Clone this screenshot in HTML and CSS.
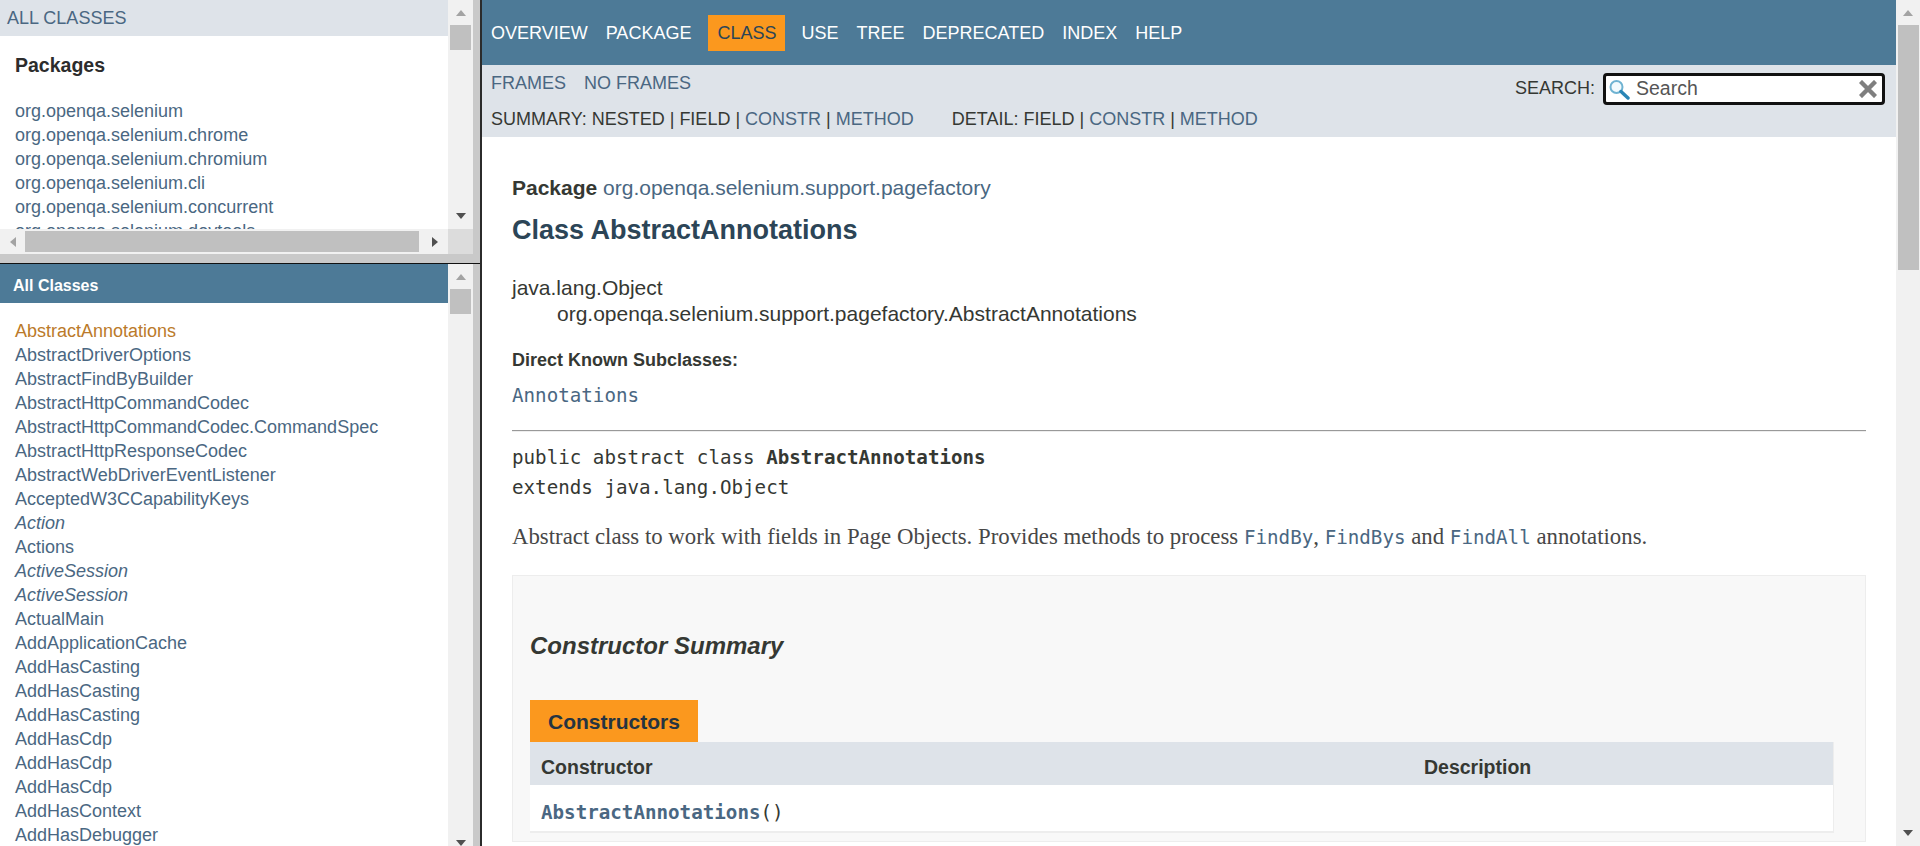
FILE: index.html
```html
<!doctype HTML>
<html>

<head>
  <title>AbstractAnnotations</title>
  <link rel="stylesheet" href="styles.css">
</head>

<body>
  <div class="frames">
    <div class="side">
      <div class="packages-frame">
        <div class="packages-view">
          <div class="packages-scroll">
            <div class="all-link"><a href="#">ALL CLASSES</a></div>
            <h2 class="packages-title">Packages</h2>
            <ul class="side-list packages-list">
              <li><a href="#">org.openqa.selenium</a></li>
              <li><a href="#">org.openqa.selenium.chrome</a></li>
              <li><a href="#">org.openqa.selenium.chromium</a></li>
              <li><a href="#">org.openqa.selenium.cli</a></li>
              <li><a href="#">org.openqa.selenium.concurrent</a></li>
              <li><a href="#">org.openqa.selenium.devtools</a></li>
            </ul>
          </div>
          <div class="vbar vbar-top">
            <span class="arrow up faint"></span>
            <span class="thumb"></span>
            <span class="arrow down"></span>
          </div>
        </div>
        <div class="hbar">
          <div class="hbar-track">
            <span class="arrow left faint"></span>
            <span class="hthumb"></span>
            <span class="arrow right"></span>
          </div>
          <div class="hbar-corner"></div>
        </div>
      </div>
      <div class="classes-frame">
        <div class="classes-scroll">
          <h1 class="classes-title">All Classes</h1>
          <ul class="side-list classes-list">
            <li><a href="#" class="visited">AbstractAnnotations</a></li>
            <li><a href="#">AbstractDriverOptions</a></li>
            <li><a href="#">AbstractFindByBuilder</a></li>
            <li><a href="#">AbstractHttpCommandCodec</a></li>
            <li><a href="#">AbstractHttpCommandCodec.CommandSpec</a></li>
            <li><a href="#">AbstractHttpResponseCodec</a></li>
            <li><a href="#">AbstractWebDriverEventListener</a></li>
            <li><a href="#">AcceptedW3CCapabilityKeys</a></li>
            <li><a href="#"><i>Action</i></a></li>
            <li><a href="#">Actions</a></li>
            <li><a href="#"><i>ActiveSession</i></a></li>
            <li><a href="#"><i>ActiveSession</i></a></li>
            <li><a href="#">ActualMain</a></li>
            <li><a href="#">AddApplicationCache</a></li>
            <li><a href="#">AddHasCasting</a></li>
            <li><a href="#">AddHasCasting</a></li>
            <li><a href="#">AddHasCasting</a></li>
            <li><a href="#">AddHasCdp</a></li>
            <li><a href="#">AddHasCdp</a></li>
            <li><a href="#">AddHasCdp</a></li>
            <li><a href="#">AddHasContext</a></li>
            <li><a href="#">AddHasDebugger</a></li>
          </ul>
        </div>
        <div class="vbar vbar-classes">
          <span class="arrow up faint"></span>
          <span class="thumb"></span>
          <span class="arrow down"></span>
        </div>
      </div>
    </div>

    <main class="content-frame">
      <div class="content-scroll">
        <nav class="topnav">
          <a href="#">OVERVIEW</a>
          <a href="#">PACKAGE</a>
          <a href="#" class="current">CLASS</a>
          <a href="#">USE</a>
          <a href="#">TREE</a>
          <a href="#">DEPRECATED</a>
          <a href="#">INDEX</a>
          <a href="#">HELP</a>
        </nav>
        <div class="subnav">
          <div class="subnav-links">
            <div class="frames-links"><a href="#">FRAMES</a><a href="#">NO FRAMES</a></div>
            <div class="summary-links">
              <span>SUMMARY: NESTED | FIELD | <a href="#">CONSTR</a> | <a href="#">METHOD</a></span>
              <span>DETAIL: FIELD | <a href="#">CONSTR</a> | <a href="#">METHOD</a></span>
            </div>
          </div>
          <div class="search">
            <label for="search">SEARCH:</label>
            <div class="search-box">
              <svg class="search-icon" width="23" height="21" viewBox="0 0 23 21">
                <circle cx="8.5" cy="8" r="6" fill="#f2fafd" stroke="#6fb3d2" stroke-width="2"/>
                <path d="M13 12.5l7 6.5" stroke="#2a85b5" stroke-width="3.4" stroke-linecap="round"/>
              </svg>
              <input id="search" type="text" placeholder="Search">
              <svg class="search-clear" width="18" height="18" viewBox="0 0 18 18">
                <path d="M3 3l12 12M15 3L3 15" stroke="#7f7f7f" stroke-width="4.4" stroke-linecap="square"/>
              </svg>
            </div>
          </div>
        </div>

        <div class="page">
          <div class="package-line"><b>Package</b> <a href="#">org.openqa.selenium.support.pagefactory</a></div>
          <h2 class="class-title">Class AbstractAnnotations</h2>
          <div class="inherit">
            <div>java.lang.Object</div>
            <div class="inherit-child">org.openqa.selenium.support.pagefactory.AbstractAnnotations</div>
          </div>
          <div class="subclass-label">Direct Known Subclasses:</div>
          <div class="subclass-link"><a href="#" class="mono">Annotations</a></div>
          <hr class="rule">
          <pre class="signature">public abstract class <b>AbstractAnnotations</b>
extends java.lang.Object</pre>
          <div class="description">Abstract class to work with fields in Page Objects. Provides methods to process <a href="#" class="mono">FindBy</a>, <a href="#" class="mono">FindBys</a> and <a href="#" class="mono">FindAll</a> annotations.</div>

          <section class="summary-box">
            <h3 class="summary-title">Constructor Summary</h3>
            <div class="tab"><span>Constructors</span></div>
            <div class="table">
              <div class="table-head"><span class="col-first">Constructor</span><span>Description</span></div>
              <div class="table-row"><span class="mono"><a href="#">AbstractAnnotations</a>()</span></div>
            </div>
          </section>
        </div>
      </div>
      <div class="vbar vbar-main">
        <span class="arrow up faint"></span>
        <span class="thumb"></span>
        <span class="arrow down"></span>
      </div>
    </main>
  </div>
</body>

</html>
```

FILE: styles.css
```css
*,
*::before,
*::after {
  box-sizing: border-box;
}

html,
body {
  margin: 0;
  height: 100%;
  overflow: hidden;
}

body {
  font-family: "Liberation Sans", Arial, sans-serif;
  font-size: 18px;
  color: #353833;
  background: #fff;
}

a {
  color: #4a6782;
  text-decoration: none;
}

h1,
h2,
h3,
ul,
pre {
  margin: 0;
  padding: 0;
}

ul {
  list-style: none;
}

.frames {
  display: flex;
  height: 846px;
}

.side {
  width: 480px;
  flex: none;
  display: flex;
  flex-direction: column;
}

.content-frame {
  flex: 1;
  display: flex;
  min-width: 0;
  border-left: 2px solid #2b2b2b;
}

/* left frames */
.packages-frame {
  height: 263px;
  flex: none;
  display: flex;
  flex-direction: column;
  background: #c9c9c9;
  padding-right: 7px;
  padding-bottom: 9px;
}

.packages-view {
  height: 229px;
  display: flex;
}

.packages-scroll,
.classes-scroll {
  width: 448px;
  overflow: hidden;
  background: #fff;
}

.all-link {
  height: 36px;
  background: #dee3e9;
  padding-left: 7px;
  line-height: 36px;
}

.packages-title {
  font-size: 19.5px;
  line-height: 24px;
  padding: 17px 0 0 15px;
  color: #2c2c2c;
}

.side-list {
  padding-left: 15px;
  line-height: 24px;
  white-space: nowrap;
}

.packages-list {
  padding-top: 22px;
}

.classes-frame {
  flex: 1;
  min-height: 0;
  display: flex;
  border-top: 1px solid #111;
  background: #c9c9c9;
  padding-right: 7px;
}

.classes-title {
  height: 39px;
  line-height: 43px;
  padding-left: 13px;
  font-size: 16px;
  color: #fff;
  background: #4d7a97;
}

.classes-list {
  padding-top: 16px;
}

.visited {
  color: #bb7a2a;
}

/* scrollbars */
.vbar {
  width: 25px;
  flex: none;
  display: flex;
  flex-direction: column;
  align-items: center;
  background: #f1f1f1;
  padding: 10px 0;
}

.vbar-classes {
  padding-bottom: 0;
}

.thumb {
  width: 21px;
  height: 25px;
  margin-top: 9px;
  background: #c0c0c0;
}

.vbar .arrow.down {
  margin-top: auto;
}

.vbar-main {
  width: 24px;
}

.vbar-main .thumb {
  height: 245px;
}

.hbar {
  height: 25px;
  flex: none;
  display: flex;
}

.hbar-track {
  width: 448px;
  display: flex;
  align-items: center;
  background: #f1f1f1;
  padding: 0 10px;
}

.hthumb {
  width: 394px;
  height: 21px;
  margin-left: 9px;
  background: #c0c0c0;
}

.hbar .arrow.right {
  margin-left: auto;
}

.hbar-corner {
  width: 25px;
  background: #dcdcdc;
}

.arrow {
  width: 0;
  height: 0;
  flex: none;
  border: 5.5px solid transparent;
}

.arrow.up {
  border-top-width: 0;
  border-bottom: 6px solid #505050;
}

.arrow.down {
  border-bottom-width: 0;
  border-top: 6px solid #505050;
}

.arrow.left {
  border-left-width: 0;
  border-right: 6px solid #505050;
}

.arrow.right {
  border-right-width: 0;
  border-left: 6px solid #505050;
}

.arrow.up.faint {
  border-bottom-color: #a3a3a3;
}

.arrow.left.faint {
  border-right-color: #a3a3a3;
}

/* content frame */
.content-scroll {
  flex: 1;
  min-width: 0;
  overflow: hidden;
}

.topnav {
  height: 65px;
  display: flex;
  align-items: flex-start;
  gap: 18px;
  padding: 15px 0 0 9px;
  background: #4d7a97;
}

.topnav a {
  line-height: 36px;
  color: #fff;
}

.topnav a.current {
  padding: 0 9px;
  margin: 0 -2px 0 -1px;
  color: #2c4557;
  background: #fb981e;
}

.subnav {
  height: 72px;
  display: flex;
  justify-content: space-between;
  background: #dee3e9;
  padding: 0 11px 0 9px;
}

.frames-links {
  display: flex;
  gap: 18px;
  line-height: 36px;
}

.summary-links {
  display: flex;
  gap: 38px;
  line-height: 36px;
}

.search {
  display: flex;
  align-items: flex-start;
  gap: 8px;
  padding-top: 8px;
}

.search label {
  line-height: 30px;
}

.search-box {
  width: 282px;
  height: 32px;
  display: flex;
  align-items: center;
  padding: 0 5px 0 2px;
  background: #fff;
  border: 3px solid #111;
  border-radius: 4px;
}

.search-icon {
  flex: none;
}

.search-box input {
  flex: 1;
  min-width: 0;
  height: 24px;
  padding: 0 0 2px 5px;
  border: 0;
  outline: 0;
  background: transparent;
  font-family: inherit;
  font-size: 19.5px;
}

.search-box input::placeholder {
  color: #555;
  opacity: 1;
}

.search-clear {
  flex: none;
}

.page {
  padding: 36px 30px 0;
}

.package-line {
  line-height: 30px;
  font-size: 21px;
}

.class-title {
  font-size: 27px;
  line-height: 30px;
  padding-top: 12px;
  color: #2c4557;
}

.inherit {
  padding-top: 30px;
  font-size: 21px;
  line-height: 26px;
}

.inherit-child {
  padding-left: 45px;
}

.subclass-label {
  padding-top: 21px;
  font-weight: bold;
  line-height: 24px;
  font-size: 18px;
}

.mono,
.signature {
  font-family: "DejaVu Sans Mono", monospace;
  font-size: 19.2px;
}

.subclass-link {
  padding-top: 12px;
  line-height: 24px;
}

.rule {
  margin: 22px 0 0;
  height: 2px;
  border: 0;
  border-top: 1px solid #999;
  border-bottom: 1px solid #eee;
}

.signature {
  padding-top: 11px;
  line-height: 30px;
  color: #353833;
}

.description {
  padding-top: 19px;
  font-family: "Liberation Serif", serif;
  font-size: 22.8px;
  line-height: 30px;
  color: #474747;
}

.summary-box {
  height: 267px;
  margin-top: 22px;
  padding: 0 31px 0 17px;
  background: #f8f8f8;
  border: 1px solid #ededed;
}

.summary-title {
  padding-top: 55px;
  font-size: 24px;
  font-style: italic;
  line-height: 30px;
  color: #353833;
}

.tab {
  display: inline-block;
  margin-top: 39px;
  vertical-align: top;
  height: 42px;
  line-height: 43px;
  padding: 0 18px;
  font-size: 21px;
  font-weight: bold;
  color: #253441;
  background: #fb981e;
}

.table {
  border: 1px solid #ededed;
  border-width: 0 1px 2px 0;
  background: #fff;
}

.table-head {
  height: 43px;
  display: flex;
  align-items: center;
  padding: 7px 0 0 11px;
  font-size: 19.5px;
  font-weight: bold;
  color: #353833;
  background: #dee3e9;
}

.col-first {
  width: 883px;
  flex: none;
}

.table-row {
  height: 46px;
  display: flex;
  align-items: center;
  padding: 8px 0 0 11px;
}

.table-row a {
  font-weight: bold;
}
```
